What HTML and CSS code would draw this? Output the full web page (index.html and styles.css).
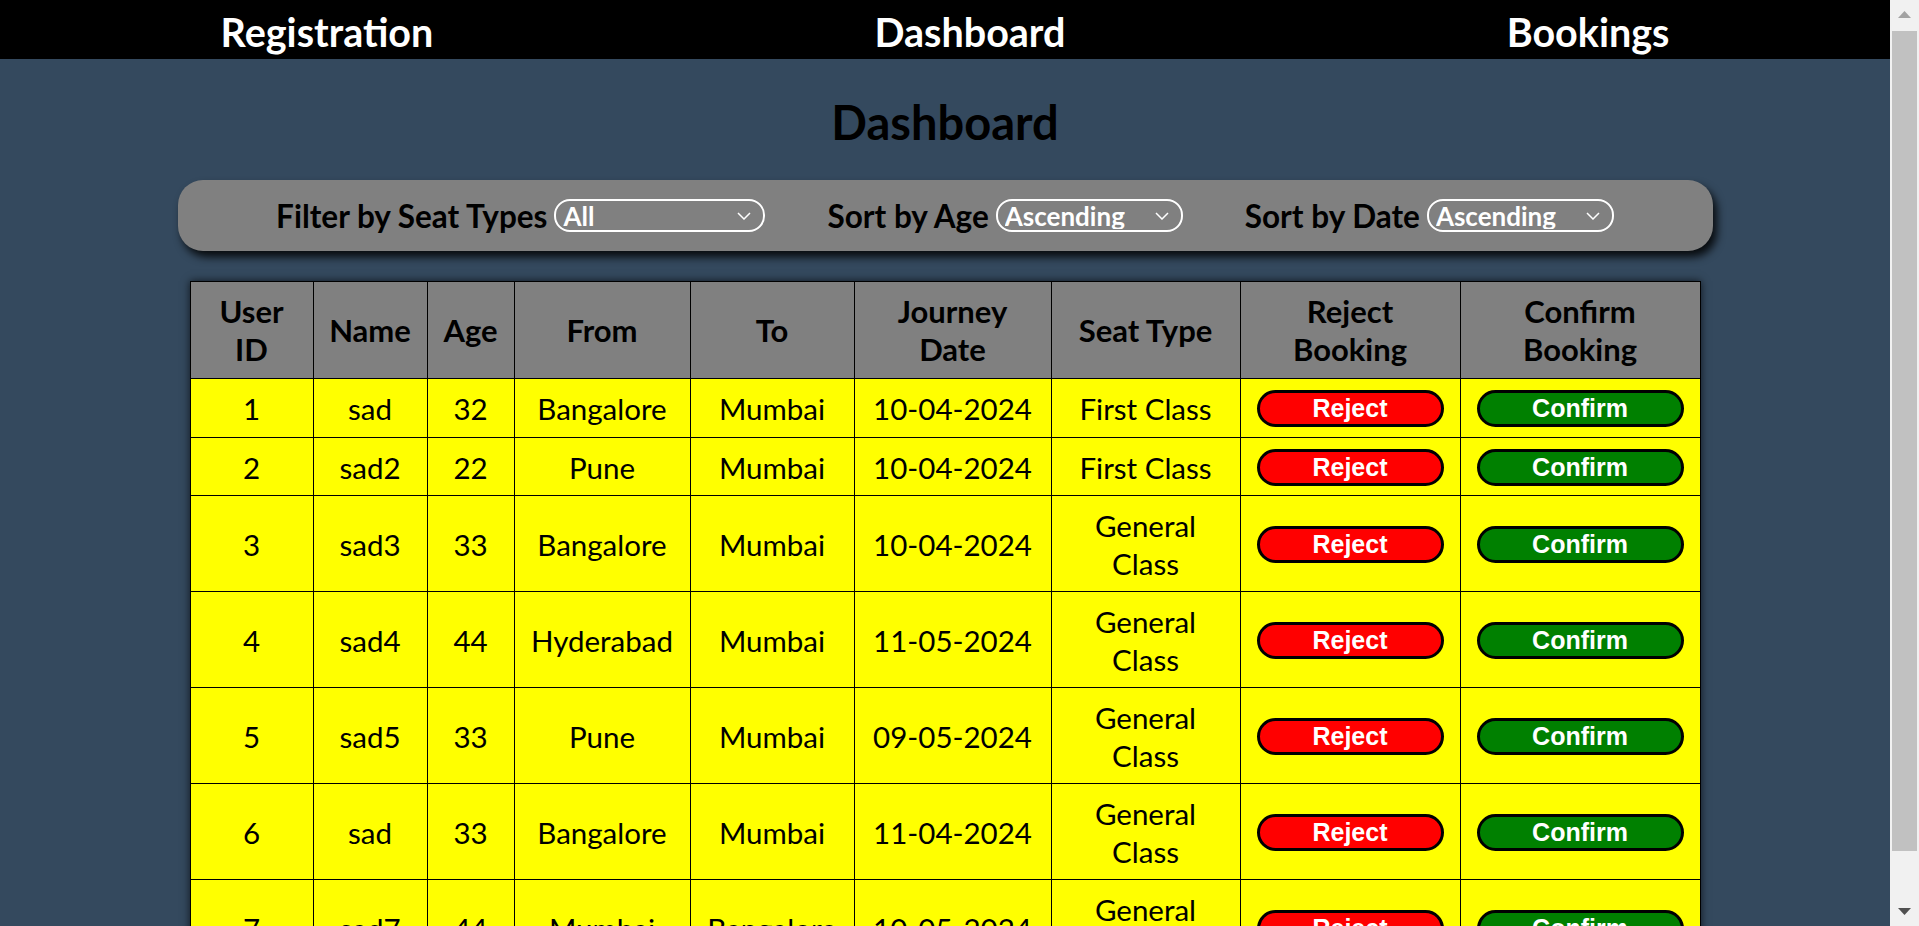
FILE: index.html
```html
<!DOCTYPE html>
<html lang="en">
<head>
<meta charset="utf-8">
<title>Dashboard</title>
<link rel="stylesheet" href="styles.css">
</head>
<body>
<header class="topnav">
  <a class="nav-link" href="#">Registration</a>
  <a class="nav-link" href="#">Dashboard</a>
  <a class="nav-link" href="#">Bookings</a>
</header>

<main class="page">
  <h1 class="title">Dashboard</h1>

  <div class="filters">
    <div class="filter-group">
      <label class="filter-label">Filter by Seat Types</label>
      <span class="select-wrap select-wide">
        <select class="select"><option>All</option><option>First Class</option><option>General Class</option></select>
        <svg class="chev" width="14" height="8" viewBox="0 0 14 8"><path d="M1 1 L7 7 L13 1" fill="none" stroke="#fff" stroke-width="1.5"/></svg>
      </span>
    </div>
    <div class="filter-group">
      <label class="filter-label">Sort by Age</label>
      <span class="select-wrap">
        <select class="select"><option>Ascending</option><option>Descending</option></select>
        <svg class="chev" width="14" height="8" viewBox="0 0 14 8"><path d="M1 1 L7 7 L13 1" fill="none" stroke="#fff" stroke-width="1.5"/></svg>
      </span>
    </div>
    <div class="filter-group">
      <label class="filter-label">Sort by Date</label>
      <span class="select-wrap">
        <select class="select"><option>Ascending</option><option>Descending</option></select>
        <svg class="chev" width="14" height="8" viewBox="0 0 14 8"><path d="M1 1 L7 7 L13 1" fill="none" stroke="#fff" stroke-width="1.5"/></svg>
      </span>
    </div>
  </div>

  <table class="bookings">
    <colgroup>
      <col class="c-id"><col class="c-name"><col class="c-age"><col class="c-from"><col class="c-to">
      <col class="c-date"><col class="c-seat"><col class="c-reject"><col class="c-confirm">
    </colgroup>
    <thead>
      <tr>
        <th>User<br>ID</th><th>Name</th><th>Age</th><th>From</th><th>To</th>
        <th>Journey<br>Date</th><th>Seat Type</th><th>Reject<br>Booking</th><th>Confirm<br>Booking</th>
      </tr>
    </thead>
    <tbody>
      <tr><td>1</td><td>sad</td><td>32</td><td>Bangalore</td><td>Mumbai</td><td>10-04-2024</td><td>First Class</td>
        <td><button class="btn btn-reject">Reject</button></td><td><button class="btn btn-confirm">Confirm</button></td></tr>
      <tr><td>2</td><td>sad2</td><td>22</td><td>Pune</td><td>Mumbai</td><td>10-04-2024</td><td>First Class</td>
        <td><button class="btn btn-reject">Reject</button></td><td><button class="btn btn-confirm">Confirm</button></td></tr>
      <tr><td>3</td><td>sad3</td><td>33</td><td>Bangalore</td><td>Mumbai</td><td>10-04-2024</td><td>General<br>Class</td>
        <td><button class="btn btn-reject">Reject</button></td><td><button class="btn btn-confirm">Confirm</button></td></tr>
      <tr><td>4</td><td>sad4</td><td>44</td><td>Hyderabad</td><td>Mumbai</td><td>11-05-2024</td><td>General<br>Class</td>
        <td><button class="btn btn-reject">Reject</button></td><td><button class="btn btn-confirm">Confirm</button></td></tr>
      <tr><td>5</td><td>sad5</td><td>33</td><td>Pune</td><td>Mumbai</td><td>09-05-2024</td><td>General<br>Class</td>
        <td><button class="btn btn-reject">Reject</button></td><td><button class="btn btn-confirm">Confirm</button></td></tr>
      <tr><td>6</td><td>sad</td><td>33</td><td>Bangalore</td><td>Mumbai</td><td>11-04-2024</td><td>General<br>Class</td>
        <td><button class="btn btn-reject">Reject</button></td><td><button class="btn btn-confirm">Confirm</button></td></tr>
      <tr><td>7</td><td>sad7</td><td>44</td><td>Mumbai</td><td>Bangalore</td><td>10-05-2024</td><td>General<br>Class</td>
        <td><button class="btn btn-reject">Reject</button></td><td><button class="btn btn-confirm">Confirm</button></td></tr>
    </tbody>
  </table>
</main>

<div class="scrollbar">
  <div class="sb-btn sb-up"><svg width="13" height="7" viewBox="0 0 13 7"><path d="M0 7 L6.5 0 L13 7 Z" fill="#a3a3a3"/></svg></div>
  <div class="sb-track"><div class="sb-thumb"></div></div>
  <div class="sb-btn sb-down"><svg width="13" height="7" viewBox="0 0 13 7"><path d="M0 0 L6.5 7 L13 0 Z" fill="#505050"/></svg></div>
</div>
</body>
</html>
```

FILE: styles.css
```css
html, body {
  margin: 0;
  padding: 0;
  overflow: hidden;
}

body {
  background: #34495e;
  font-family: Lato, "Open Sans", sans-serif;
  color: #000;
  padding-right: 29px;
  height: 926px;
}

.topnav {
  background: #000;
  height: 59px;
  box-sizing: border-box;
  padding-top: 4px;
  display: flex;
  justify-content: space-around;
  align-items: center;
}

.nav-link {
  color: #fff;
  text-decoration: none;
  font-weight: 700;
  font-size: 39.5px;
  line-height: 1;
}

.page {
  width: 1535px;
  margin: 0 auto;
}

.title {
  margin: 38px 0 33px;
  text-align: center;
  font-size: 47px;
  line-height: 50px;
  font-weight: 700;
}

.filters {
  background: #808080;
  border-radius: 25px;
  height: 71px;
  box-sizing: border-box;
  display: flex;
  justify-content: center;
  align-items: center;
  gap: 62px;
  box-shadow: 4px 6px 8px rgba(0, 0, 0, 0.85);
}

.filter-group {
  display: flex;
  align-items: center;
  gap: 7px;
}

.filter-label {
  font-size: 31.5px;
  font-weight: 700;
}

.select-wrap {
  position: relative;
  display: inline-block;
  width: 187px;
  height: 33px;
}

.select-wide {
  width: 211px;
}

.select {
  appearance: none;
  -webkit-appearance: none;
  width: 100%;
  height: 100%;
  box-sizing: border-box;
  background: transparent;
  border: 2px solid #fff;
  border-radius: 16px;
  color: #fff;
  font-family: Lato, sans-serif;
  font-weight: 700;
  font-size: 26px;
  line-height: 1;
  padding: 0 0 0 7px;
  outline: none;
}

.chev {
  position: absolute;
  right: 14px;
  top: 13px;
  pointer-events: none;
}

.bookings {
  width: 1510px;
  margin: 30px auto 0;
  border-collapse: collapse;
  table-layout: fixed;
  box-shadow: 0 0 8px rgba(0, 0, 0, 0.7);
}

.c-id { width: 123px; }
.c-name { width: 114px; }
.c-age { width: 87px; }
.c-from { width: 176px; }
.c-to { width: 164px; }
.c-date { width: 197px; }
.c-seat { width: 189px; }
.c-reject { width: 220px; }
.c-confirm { width: 240px; }

.bookings th,
.bookings td {
  border: 1px solid #000;
  padding: 11px 16px 9px;
  text-align: center;
  vertical-align: middle;
  font-size: 29.5px;
  line-height: 37.5px;
}

.bookings th {
  background: #808080;
  font-weight: 700;
  font-size: 31px;
  padding: 11px 6px 10px;
}

.bookings td {
  background: #ffff00;
  font-weight: 400;
}

.btn {
  display: block;
  width: 100%;
  height: 37px;
  box-sizing: border-box;
  border: 3px solid #000;
  border-radius: 20px;
  color: #fff;
  font-family: "Liberation Sans", Arial, sans-serif;
  font-weight: 700;
  font-size: 25px;
  line-height: 1;
  padding: 0;
}

.btn-reject { background: #ff0000; }
.btn-confirm { background: #008000; }

.scrollbar {
  position: fixed;
  top: 0;
  right: 0;
  width: 29px;
  height: 926px;
  background: #f1f1f1;
  display: flex;
  flex-direction: column;
}

.sb-btn {
  height: 29px;
  display: flex;
  align-items: center;
  justify-content: center;
}

.sb-track {
  flex: 1;
  padding: 2px 2px;
}

.sb-thumb {
  background: #c1c1c1;
  height: 820px;
}
```
